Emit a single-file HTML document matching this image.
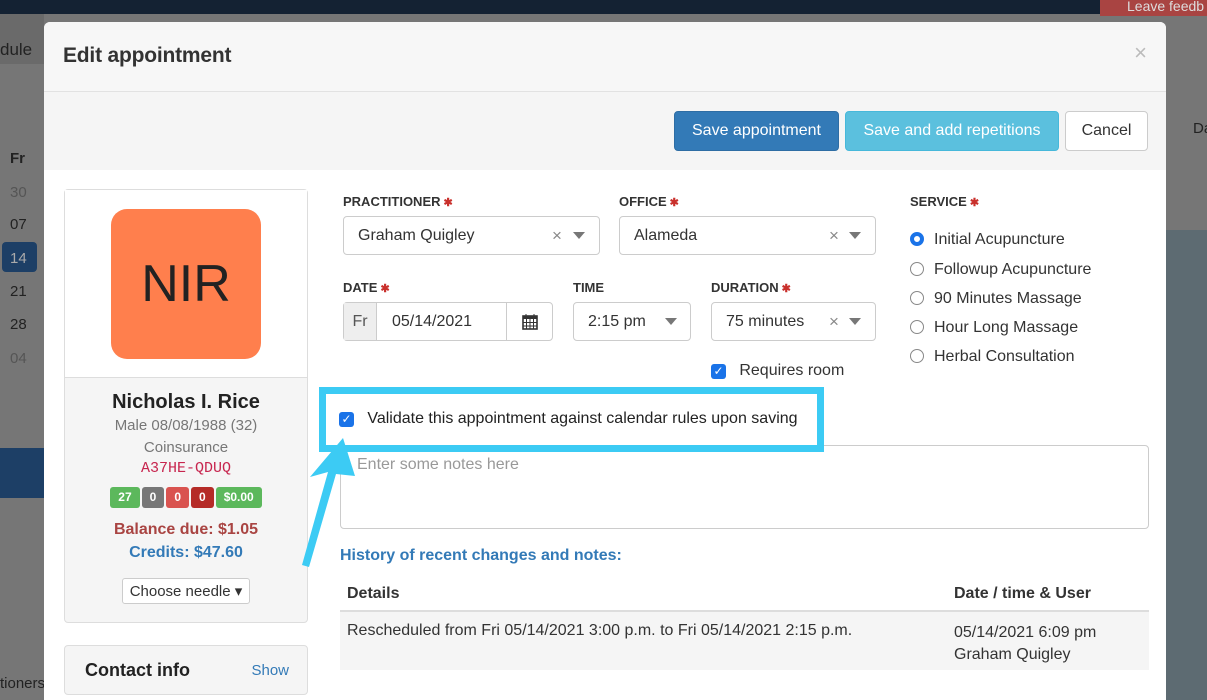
<!DOCTYPE html>
<html style="background:#767676"><head><style>
*{box-sizing:border-box}
body{margin:0;width:1207px;height:700px;overflow:hidden;font-family:"Liberation Sans",sans-serif;background:#767676;position:relative;color:#333}
.top{position:absolute;left:0;top:0;width:1207px;height:14px;background:#142233}
.abs{position:absolute}
.modal{position:absolute;left:44px;top:22px;width:1122px;height:678px;background:#fff;border-radius:6px 6px 0 0;overflow:hidden}
.mh{height:70px;background:#f7f7f7;border-bottom:1px solid #e2e2e2;position:relative}
.mh h4{margin:0;position:absolute;left:19px;top:22px;font-size:21px;font-weight:bold;color:#333;letter-spacing:-0.2px}
.bar{height:78px;background:#f5f5f5;position:relative}
.btn{position:absolute;height:40px;border-radius:4px;font-size:16px;line-height:38px;text-align:center}
.lbl{position:absolute;font-size:13px;font-weight:bold;color:#333}
.lbl i{color:#c9302c;font-style:normal;font-size:11px;margin-left:3px}
.inp{position:absolute;border:1px solid #ccc;border-radius:4px;height:39px;font-size:16px;line-height:37px;padding-left:14px;background:#fff}
.x{position:absolute;color:#888;font-size:17px}
.car{position:absolute;width:0;height:0;border-left:6px solid transparent;border-right:6px solid transparent;border-top:7px solid #777}
.radio{position:absolute;left:866px;font-size:16px}
.radio span{display:inline-block;width:14px;height:14px;border:1px solid #888;border-radius:50%;vertical-align:-2px;margin-right:10px}
.cb{display:inline-block;width:15px;height:15px;background:#1a73e8;border-radius:3px;color:#fff;font-size:12px;line-height:15px;text-align:center;vertical-align:-2px}
.badge{display:inline-block;height:21px;line-height:21px;font-size:12px;font-weight:bold;color:#fff;border-radius:3px;padding:0 8px;margin:0 1px}
.row{display:flex;align-items:center}
</style></head><body>
<div class="top"></div>
<div class="abs" style="left:1100px;top:0;width:107px;height:16px;background:#a94442;color:#ddd;font-size:14px;line-height:12px;padding-left:27px">Leave feedb</div>
<div class="abs" style="left:0;top:14px;width:44px;height:50px;background:#6a6a6a"></div>
<div class="abs" style="left:0;top:40px;font-size:17px;color:#222">dule</div>
<div class="abs" style="left:10px;top:150px;font-size:15px;font-weight:bold;color:#222">Fr</div>
<div class="abs" style="left:10px;top:184px;font-size:15px;color:#555">30</div>
<div class="abs" style="left:10px;top:216px;font-size:15px;color:#222">07</div>
<div class="abs" style="left:2px;top:242px;width:35px;height:30px;background:#1d3f66;border-radius:4px;color:#aaa;font-size:15px;padding:8px 0 0 8px">14</div>
<div class="abs" style="left:10px;top:283px;font-size:15px;color:#222">21</div>
<div class="abs" style="left:10px;top:316px;font-size:15px;color:#222">28</div>
<div class="abs" style="left:10px;top:350px;font-size:15px;color:#555">04</div>
<div class="abs" style="left:0;top:448px;width:44px;height:50px;background:#1d3f66"></div>
<div class="abs" style="left:0;top:675px;font-size:15px;color:#222">tioners</div>
<div class="abs" style="left:1166px;top:230px;width:41px;height:470px;background:#5d6b72"></div>
<div class="abs" style="left:1193px;top:120px;font-size:15px;color:#222">Da</div>

<div class="modal">
 <div class="mh"><h4>Edit appointment</h4><span class="abs" style="right:19px;top:18px;font-size:22px;color:#bbb">×</span></div>
 <div class="bar">
  <div class="btn" style="left:630px;top:19px;width:165px;background:#337ab7;color:#fff;border:1px solid #2e6da4">Save appointment</div>
  <div class="btn" style="left:801px;top:19px;width:214px;background:#5bc0de;color:#fff;border:1px solid #46b8da">Save and add repetitions</div>
  <div class="btn" style="left:1021px;top:19px;width:83px;background:#fff;border:1px solid #ccc;color:#333">Cancel</div>
 </div>
 <div class="abs" style="left:20px;top:167px;width:244px;height:434px;border:1px solid #ddd;border-radius:4px;background:#f5f5f5">
  <div style="height:188px;background:#fff;border-bottom:1px solid #ddd;position:relative">
   <div class="abs" style="left:46px;top:19px;width:150px;height:150px;background:#ff7f4d;border-radius:16px;font-size:52px;text-align:center;line-height:150px;color:#222">NIR</div>
  </div>
  <div style="text-align:center">
   <div style="font-size:20px;font-weight:bold;margin-top:13px;color:#222">Nicholas I. Rice</div>
   <div style="font-size:15px;color:#777;margin-top:3px">Male 08/08/1988 (32)</div>
   <div style="font-size:15px;color:#777;margin-top:5px">Coinsurance</div>
   <div style="font-size:15px;color:#c7254e;font-family:'Liberation Mono',monospace;margin-top:4px">A37HE-QDUQ</div>
   <div style="margin-top:10px;font-size:0"><span class="badge" style="background:#5cb85c">27</span> <span class="badge" style="background:#777">0</span> <span class="badge" style="background:#d9534f">0</span> <span class="badge" style="background:#b52b27">0</span> <span class="badge" style="background:#5cb85c">$0.00</span></div>
   <div style="font-size:16px;font-weight:bold;color:#a94442;margin-top:13px">Balance due: $1.05</div>
   <div style="font-size:16px;font-weight:bold;color:#337ab7;margin-top:5px">Credits: $47.60</div>
   <div style="display:inline-block;margin-top:16px;border:1px solid #ccc;border-radius:3px;background:#fff;font-size:15px;padding:3px 7px">Choose needle ▾</div>
  </div>
 </div>
 <div class="abs" style="left:20px;top:623px;width:244px;height:50px;border:1px solid #ddd;border-radius:4px;background:#f5f5f5">
  <span class="abs" style="left:20px;top:14px;font-size:18px;font-weight:bold;color:#222">Contact info</span>
  <span class="abs" style="right:18px;top:16px;font-size:15px;color:#337ab7">Show</span>
 </div>

 <div class="lbl" style="left:299px;top:172px">PRACTITIONER<i>✱</i></div>
 <div class="inp" style="left:299px;top:194px;width:257px">Graham Quigley</div>
 <span class="x" style="left:508px;top:204px">×</span><div class="car" style="left:529px;top:210px"></div>
 <div class="lbl" style="left:575px;top:172px">OFFICE<i>✱</i></div>
 <div class="inp" style="left:575px;top:194px;width:257px">Alameda</div>
 <span class="x" style="left:785px;top:204px">×</span><div class="car" style="left:805px;top:210px"></div>
 <div class="lbl" style="left:866px;top:172px">SERVICE<i>✱</i></div>
 <div class="radio" style="top:209px"><span style="border:4px solid #1a73e8;background:#fff"></span>Initial Acupuncture</div>
 <div class="radio" style="top:239px"><span></span>Followup Acupuncture</div>
 <div class="radio" style="top:268px"><span></span>90 Minutes Massage</div>
 <div class="radio" style="top:297px"><span></span>Hour Long Massage</div>
 <div class="radio" style="top:326px"><span></span>Herbal Consultation</div>

 <div class="lbl" style="left:299px;top:258px">DATE<i>✱</i></div>
 <div class="inp" style="left:299px;top:280px;width:210px;padding:0">
  <div class="abs" style="left:0;top:0;width:33px;height:37px;background:#eee;border-right:1px solid #ccc;text-align:center;color:#555">Fr</div>
  <span class="abs" style="left:48px;top:0">05/14/2021</span>
  <div class="abs" style="left:162px;top:0;width:46px;height:37px;border-left:1px solid #ccc">
   <svg width="46" height="37"><rect x="16" y="13" width="14" height="13" fill="none" stroke="#333" stroke-width="1.6"/><rect x="16" y="13" width="14" height="3" fill="#333"/><path d="M19 11v4M27 11v4M16 19.5h14M16 23h14M19.5 16v10M23 16v10M26.5 16v10" stroke="#333" stroke-width="1"/></svg>
  </div>
 </div>
 <div class="lbl" style="left:529px;top:258px">TIME</div>
 <div class="inp" style="left:529px;top:280px;width:118px">2:15 pm</div><div class="car" style="left:621px;top:296px"></div>
 <div class="lbl" style="left:667px;top:258px">DURATION<i>✱</i></div>
 <div class="inp" style="left:667px;top:280px;width:165px">75 minutes</div>
 <span class="x" style="left:785px;top:290px">×</span><div class="car" style="left:805px;top:296px"></div>
 <div class="abs row" style="left:667px;top:340px;font-size:16px"><span class="cb">✓</span>&nbsp;&nbsp;&nbsp;Requires room</div>

 <div class="abs" style="left:296px;top:423px;width:809px;height:84px;border:1px solid #ccc;border-radius:4px;font-size:16px;color:#999;padding:10px 16px">Enter some notes here</div>
 <div class="abs" style="left:296px;top:525px;font-size:16px;font-weight:bold;color:#337ab7">History of recent changes and notes:</div>
 <div class="abs" style="left:296px;top:558px;width:809px;height:32px;border-bottom:2px solid #ddd;font-size:16px;font-weight:bold">
  <span class="abs" style="left:7px;top:5px">Details</span><span class="abs" style="left:614px;top:5px">Date / time &amp; User</span></div>
 <div class="abs" style="left:296px;top:590px;width:809px;height:58px;background:#f5f5f5;font-size:16px">
  <span class="abs" style="left:7px;top:10px">Rescheduled from Fri 05/14/2021 3:00 p.m. to Fri 05/14/2021 2:15 p.m.</span>
  <span class="abs" style="left:614px;top:10px;line-height:22px">05/14/2021 6:09 pm<br>Graham Quigley</span></div>
</div>

<div class="abs" style="left:319px;top:387px;width:505px;height:65px;border:7px solid #3ccbf4"></div>
<div class="abs row" style="left:339px;top:410px;font-size:16px;color:#222"><span class="cb">✓</span>&nbsp;&nbsp;&nbsp;Validate this appointment against calendar rules upon saving</div>
<svg class="abs" style="left:0;top:0" width="1207" height="700"><polygon points="343,438 310,477 328,472 302,565 309,567 336,474 355,476" fill="#3ccbf4"/></svg>
</body></html>
